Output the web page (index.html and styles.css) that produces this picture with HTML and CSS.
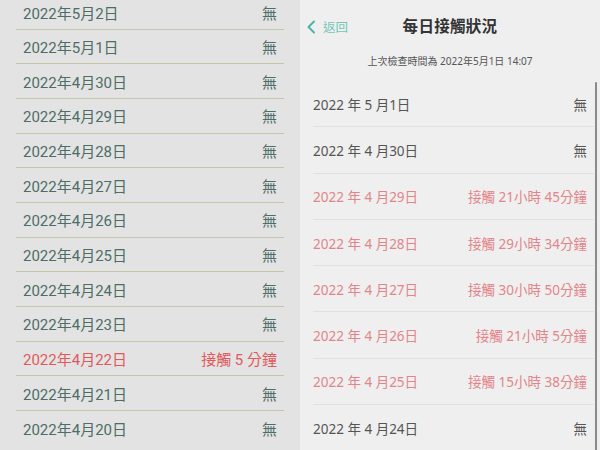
FILE: index.html
```html
<!DOCTYPE html>
<html lang="zh-Hant">
<head>
    <meta charset="UTF-8">
    <meta name="viewport" content="width=device-width, initial-scale=1.0">
    <title>每日接觸狀況</title>
    <link rel="stylesheet" href="styles.css">
</head>
<body>
    <div class="screens">
        <!-- android list -->
        <section class="android">
            <ul class="a-list">
                <li class="a-row"><span>2022年5月2日</span><span>無</span></li>
                <li class="a-row"><span>2022年5月1日</span><span>無</span></li>
                <li class="a-row"><span>2022年4月30日</span><span>無</span></li>
                <li class="a-row"><span>2022年4月29日</span><span>無</span></li>
                <li class="a-row"><span>2022年4月28日</span><span>無</span></li>
                <li class="a-row"><span>2022年4月27日</span><span>無</span></li>
                <li class="a-row"><span>2022年4月26日</span><span>無</span></li>
                <li class="a-row"><span>2022年4月25日</span><span>無</span></li>
                <li class="a-row"><span>2022年4月24日</span><span>無</span></li>
                <li class="a-row"><span>2022年4月23日</span><span>無</span></li>
                <li class="a-row hit"><span>2022年4月22日</span><span>接觸 5 分鐘</span></li>
                <li class="a-row"><span>2022年4月21日</span><span>無</span></li>
                <li class="a-row"><span>2022年4月20日</span><span>無</span></li>
            </ul>
        </section>

        <!-- ios list -->
        <section class="ios">
            <header class="nav">
                <a class="back" href="#">
                    <svg width="10" height="14" viewBox="0 0 10 14"><path d="M8 1.5 L2.5 7 L8 12.5" fill="none" stroke="#4fb3a4" stroke-width="2" stroke-linecap="round" stroke-linejoin="round"/></svg>
                    <span>返回</span>
                </a>
                <h1>每日接觸狀況</h1>
            </header>
            <p class="checked">上次檢查時間為 2022年5月1日 14:07</p>
            <div class="i-wrap">
                <ul class="i-list">
                    <li class="i-row"><span>2022 年 5 月1日</span><span>無</span></li>
                    <li class="i-row"><span>2022 年 4 月30日</span><span>無</span></li>
                    <li class="i-row hit"><span>2022 年 4 月29日</span><span>接觸 21小時 45分鐘</span></li>
                    <li class="i-row hit"><span>2022 年 4 月28日</span><span>接觸 29小時 34分鐘</span></li>
                    <li class="i-row hit"><span>2022 年 4 月27日</span><span>接觸 30小時 50分鐘</span></li>
                    <li class="i-row hit"><span>2022 年 4 月26日</span><span>接觸 21小時 5分鐘</span></li>
                    <li class="i-row hit"><span>2022 年 4 月25日</span><span>接觸 15小時 38分鐘</span></li>
                    <li class="i-row"><span>2022 年 4 月24日</span><span>無</span></li>
                </ul>
                <div class="scrollbar"></div>
            </div>
        </section>
    </div>
</body>
</html>
```

FILE: styles.css
```css
* {
    margin: 0;
    padding: 0;
    box-sizing: border-box;
}

body {
    width: 600px;
    height: 450px;
    overflow: hidden;
    font-family: "Noto Sans", "Noto Sans CJK TC", sans-serif;
}

ul {
    list-style: none;
}

.screens {
    display: grid;
    grid-template-columns: 300px 300px;
    height: 450px;
}

/* left: android */
.android {
    background: #e3e3e3;
    overflow: hidden;
}

.a-list {
    margin: -4.8px 16px 0;
}

.a-row {
    display: flex;
    justify-content: space-between;
    align-items: center;
    height: 34.65px;
    padding: 0 7px;
    border-bottom: 1.5px solid #c3c7a7;
    font-family: Roboto, "Noto Sans CJK TC", sans-serif;
    font-size: 15px;
    color: #4d6d66;
}

.a-row:last-child {
    border-bottom: none;
}

.a-row.hit {
    color: #e05a5c;
}

/* right: ios */
.ios {
    background: #efefef;
    overflow: hidden;
}

.nav {
    position: relative;
    height: 50px;
    display: flex;
    align-items: center;
    justify-content: center;
}

.nav h1 {
    font-size: 15.5px;
    font-weight: bold;
    color: #333;
    letter-spacing: 0.3px;
}

.back {
    position: absolute;
    left: 6px;
    top: 17px;
    display: flex;
    align-items: center;
    gap: 7px;
    text-decoration: none;
    color: #72c6ba;
    font-size: 12.5px;
}

.checked {
    height: 31px;
    padding-top: 3px;
    text-align: center;
    font-size: 10px;
    color: #555;
}

.i-wrap {
    position: relative;
}

.i-list {
    margin-left: 13px;
    margin-right: 6px;
}

.i-row {
    display: flex;
    justify-content: space-between;
    align-items: center;
    height: 46.3px;
    padding-right: 7px;
    border-bottom: 1px solid #e0e0e0;
    font-size: 13.5px;
    color: #555;
}

.i-row.hit {
    color: #e2858a;
}

.scrollbar {
    position: absolute;
    right: 3px;
    top: 1px;
    bottom: -40px;
    width: 2px;
    background: #8a8a8a;
    border-radius: 1px;
}
```
